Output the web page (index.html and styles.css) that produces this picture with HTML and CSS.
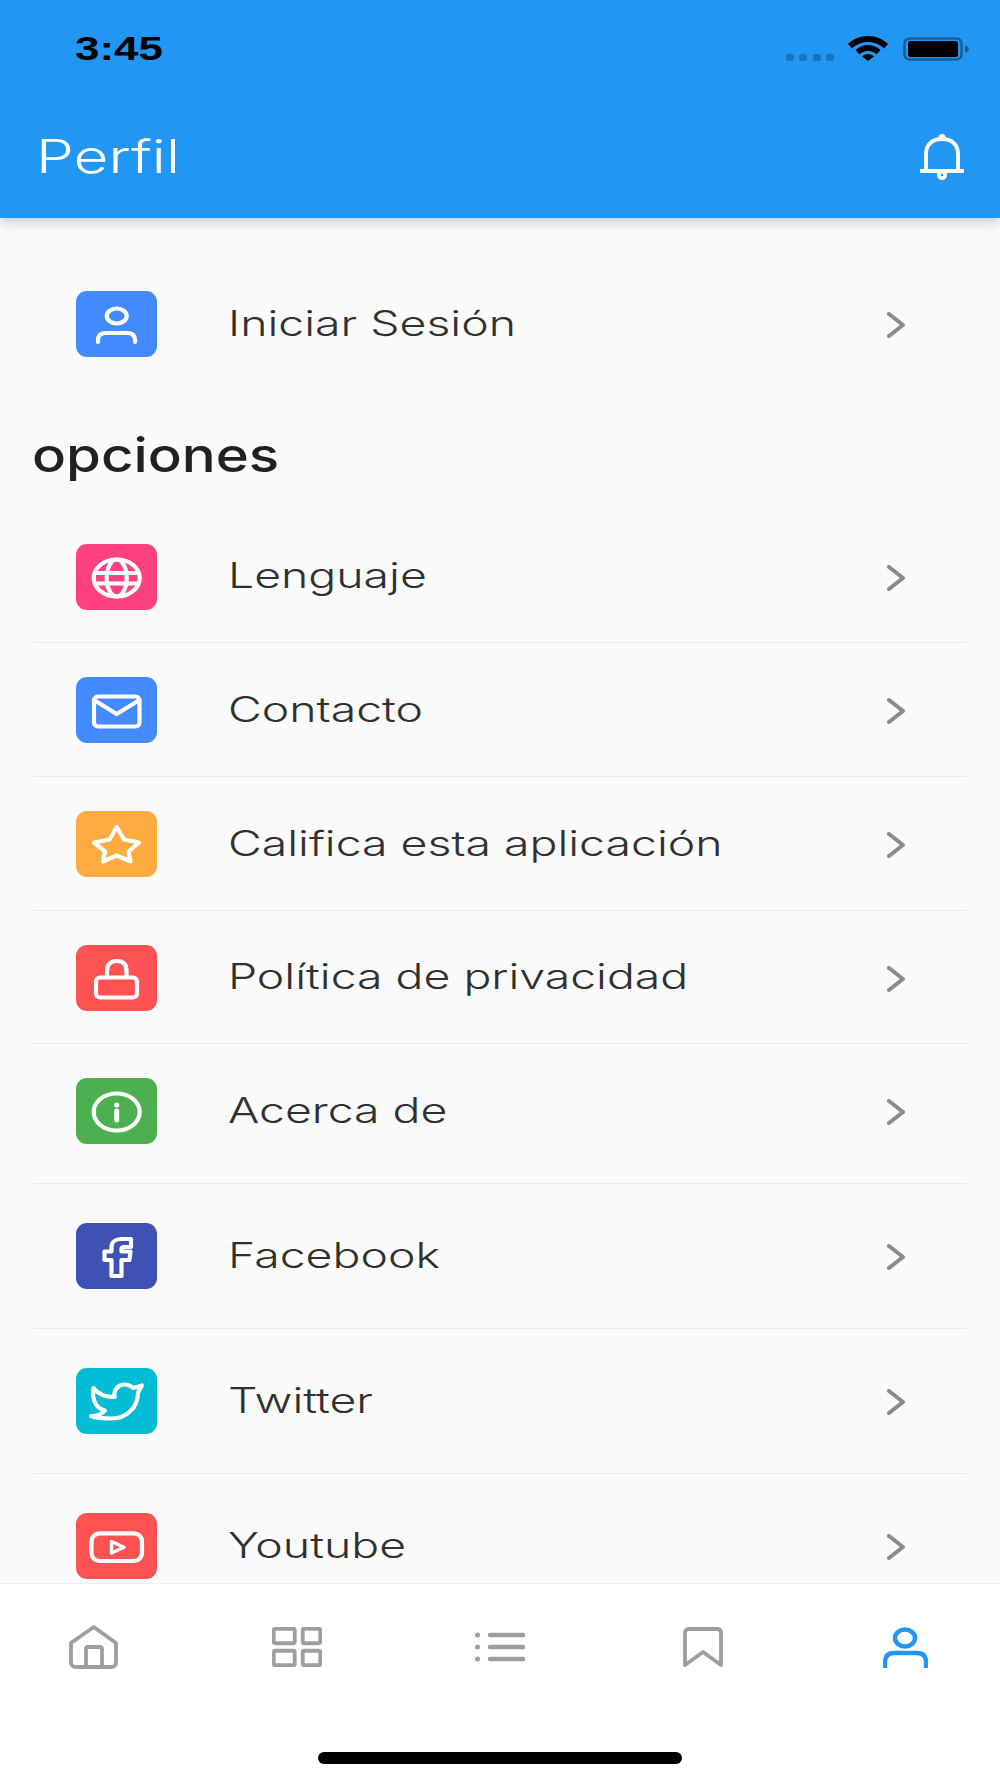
FILE: index.html
```html
<!DOCTYPE html>
<html lang="es">
<head>
<meta charset="utf-8">
<title>Perfil</title>
<link rel="stylesheet" href="styles.css">
</head>
<body>
<div class="app">
  <header class="header">
    <div class="status">
      <span class="time">3:45</span>
      <div class="status-icons">
        <div class="dots"><i></i><i></i><i></i><i></i></div>
        <svg class="wifi" viewBox="0 0 40 25"><path d="M20 0C12 0 5 3 0 8l4 4.500C8 8.500 14 6 20 6s12 2.500 16 6.500L40 8C35 3 28 0 20 0zM20 9c-5 0-9.500 2-12.500 5l4 4.500C13.500 16.500 16.500 15 20 15s6.500 1.500 8.500 3.500l4-4.500C29.500 11 25 9 20 9zM20 18c-2.500 0-4.500 1-6 2.500L20 25l6-4.500C24.500 19 22.500 18 20 18z"/></svg>
        <svg class="battery" viewBox="0 0 66 24"><rect class="batt-frame" x="1.500" y="1.500" width="57" height="21" rx="5"/><rect x="5" y="4" width="50" height="16" rx="2.500"/><path class="batt-nub" d="M62 8.500c2.500.5 4 1.800 4 3.500s-1.500 3-4 3.500z"/></svg>
      </div>
    </div>
    <div class="appbar">
      <h1 class="title"><span>Perfil</span></h1>
      <svg class="bell" viewBox="0 0 44 46"><circle class="solid" cx="22" cy="3.500" r="3.500"/><path d="M6 36V20C6 10 13 5 22 5s16 5 16 15v16"/><path d="M1 37H43"/><circle cx="22" cy="41" r="3.200"/></svg>
    </div>
  </header>

  <main class="content">
    <a class="row row-login">
      <span class="tile blue"><svg viewBox="0 0 81 66"><ellipse cx="40.700" cy="25" rx="10" ry="7.500"/><path d="M22 51V49Q22 42 30 42H51Q59 42 59 49V51"/></svg></span>
      <span class="label">Iniciar Sesión</span>
      <svg class="chevron" viewBox="0 0 18 26"><path d="M2 2L16 13L2 24"/></svg>
    </a>

    <h2 class="section"><span>opciones</span></h2>

    <div class="list">
      <a class="row">
        <span class="tile pink"><svg viewBox="0 0 81 66"><ellipse cx="40.700" cy="34" rx="23" ry="18.500"/><ellipse cx="40.700" cy="34" rx="10" ry="18.500"/><path d="M19 29H62M19 39.500H62"/></svg></span>
        <span class="label">Lenguaje</span>
        <svg class="chevron" viewBox="0 0 18 26"><path d="M2 2L16 13L2 24"/></svg>
      </a>
      <a class="row">
        <span class="tile blue"><svg viewBox="0 0 81 66"><rect x="18" y="19.500" width="45.500" height="30" rx="4"/><path d="M18 23L40.700 37L63.500 23"/></svg></span>
        <span class="label">Contacto</span>
        <svg class="chevron" viewBox="0 0 18 26"><path d="M2 2L16 13L2 24"/></svg>
      </a>
      <a class="row">
        <span class="tile orange"><svg viewBox="0 0 81 66"><path d="M40.700 16L48 28.500L63 31.500L52.500 40.500L54.500 50.500L40.700 44.500L27 50.500L29 40.500L18 31.500L33.500 28.500Z"/></svg></span>
        <span class="label">Califica esta aplicación</span>
        <svg class="chevron" viewBox="0 0 18 26"><path d="M2 2L16 13L2 24"/></svg>
      </a>
      <a class="row">
        <span class="tile red"><svg viewBox="0 0 81 66"><rect x="20" y="32.500" width="41" height="20" rx="4"/><path d="M31 32V26Q31 16 40.700 16Q50.500 16 50.500 26V32"/></svg></span>
        <span class="label">Política de privacidad</span>
        <svg class="chevron" viewBox="0 0 18 26"><path d="M2 2L16 13L2 24"/></svg>
      </a>
      <a class="row row-last-plain">
        <span class="tile green"><svg viewBox="0 0 81 66"><ellipse cx="40.700" cy="34" rx="23" ry="18.500"/><path class="stem" d="M40.700 33V42"/><circle class="solid" cx="40.700" cy="27" r="2.600"/></svg></span>
        <span class="label">Acerca de</span>
        <svg class="chevron" viewBox="0 0 18 26"><path d="M2 2L16 13L2 24"/></svg>
      </a>
      <a class="row row-social">
        <span class="tile indigo"><svg viewBox="0 0 81 66"><path d="M35.500 53V37H28.500V28.500H35.500V24C35.500 19 39.500 16 45.500 16H55V24H48Q45.500 24 45.500 26V28.500H54.500L53.500 37H45.500V53Z"/></svg></span>
        <span class="label">Facebook</span>
        <svg class="chevron" viewBox="0 0 18 26"><path d="M2 2L16 13L2 24"/></svg>
      </a>
      <a class="row row-social">
        <span class="tile cyan"><svg viewBox="0 0 81 66"><path d="M15 48C22 48 26 46 29 42.500C22 41 15 34 17.500 20C22 26 30 29 38.500 29C37.500 21 43 16.500 48 16.500C52 16.500 55 18 57 20L66 17.500L62 24.500C62 40 50 50.500 36 50.500C28 50.500 20 50 15 48Z"/></svg></span>
        <span class="label">Twitter</span>
        <svg class="chevron" viewBox="0 0 18 26"><path d="M2 2L16 13L2 24"/></svg>
      </a>
      <a class="row row-social">
        <span class="tile red"><svg viewBox="0 0 81 66"><rect x="15.500" y="20.300" width="50.500" height="27.700" rx="8"/><path class="thin" d="M35.500 28.500L48 34.300L35.500 40Z"/></svg></span>
        <span class="label">Youtube</span>
        <svg class="chevron" viewBox="0 0 18 26"><path d="M2 2L16 13L2 24"/></svg>
      </a>
    </div>
  </main>

  <nav class="tabbar">
    <div class="tabs">
      <div class="tab-cell"><svg class="tab tab-home" viewBox="0 0 49 44"><path d="M2 18L24.700 2L47 18V37Q47 42 42 42H7Q2 42 2 37Z"/><path d="M17 42V24Q17 22 19 22H31Q33 22 33 24V42"/></svg></div>
      <div class="tab-cell"><svg class="tab tab-grid" viewBox="0 0 50 40"><rect x="1.750" y="1.750" width="21" height="14.500" rx="1.500"/><rect x="30.750" y="1.750" width="17.500" height="14.500" rx="1.500"/><rect x="1.750" y="23.750" width="21" height="14.500" rx="1.500"/><rect x="30.750" y="23.750" width="17.500" height="14.500" rx="1.500"/></svg></div>
      <div class="tab-cell"><svg class="tab tab-list" viewBox="0 0 50 30"><path class="dot" d="M2.500 3V3.100M2.500 15V15.100M2.500 27V27.100"/><path d="M15 3H48M15 15H48M15 27H48"/></svg></div>
      <div class="tab-cell"><svg class="tab tab-mark" viewBox="0 0 40 40"><path d="M2 38V6Q2 2 6 2H34Q38 2 38 6V38L20 25Z"/></svg></div>
      <div class="tab-cell"><svg class="tab tab-user" viewBox="0 0 45 41"><ellipse cx="22" cy="11" rx="10" ry="8.500"/><path d="M2 41V35Q2 26 11 26H34Q43 26 43 35V41"/></svg></div>
    </div>
    <div class="home-indicator"></div>
  </nav>
</div>
</body>
</html>
```
FILE: styles.css
```css
* { box-sizing: border-box; }
html, body { margin: 0; padding: 0; }
body { background: #fafafa; font-family: "Inter", "Liberation Sans", sans-serif; }

.app { width: 1000px; height: 1778px; display: flex; flex-direction: column; overflow: hidden; }

/* header */
.header { height: 218px; background: #2196f3; position: relative; z-index: 2; box-shadow: 0 3px 12px rgba(0,0,0,.22); flex: none; }
.status { height: 98px; padding: 30px 31px 0 75px; display: flex; justify-content: space-between; align-items: flex-start; }
.time { font: 700 33px/38px "Liberation Sans", sans-serif; color: #000; display: block; transform: scaleX(1.33); transform-origin: left center; }
.status-icons { display: flex; align-items: flex-start; padding-top: 6px; }
.dots { display: flex; gap: 5.500px; margin: 18px 14px 0 0; }
.dots i { width: 8px; height: 7px; border-radius: 2px; background: #1a74bd; }
.wifi { width: 40px; height: 25px; fill: #000; margin-right: 15px; }
.battery { width: 66px; height: 24px; margin-top: 1px; }
.batt-frame { fill: none; stroke: #165f97; stroke-width: 2.500; }
.batt-nub { fill: #165f97; }

.appbar { height: 120px; padding: 0 36px 0 36px; display: flex; align-items: center; justify-content: space-between; }
.title { margin: -4px 0 0; font-size: 46px; line-height: 56px; font-weight: 300; color: #fff; }
.title span { display: block; transform: scaleX(1.31); transform-origin: left center; }
.bell { width: 44px; height: 46px; margin-top: -2px; fill: none; stroke: #fff; stroke-width: 3.800; stroke-linecap: round; }
.solid { fill: currentColor; stroke: none; }
.bell .solid { fill: #fff; }

/* content */
.content { flex: 1; min-height: 0; overflow: hidden; padding: 39px 33px 0; background: #fafafa; }
.row { display: flex; align-items: center; padding: 34px 0 32.700px 43px; }
.row-login { padding-bottom: 0; }
.list .row { border-bottom: 1px solid #e8e8e8; }
.list .row-last-plain { padding-bottom: 39px; }
.list .row-social { padding: 39px 0 39px 43px; }

.tile { width: 81px; height: 66px; border-radius: 11px; flex: none; display: block; }
.tile svg { display: block; width: 81px; height: 66px; fill: none; stroke: #fff; stroke-width: 4.200; stroke-linecap: round; stroke-linejoin: round; }
.tile .solid { fill: #fff; }
.tile .thin { stroke-width: 3.400; }
.tile .stem { stroke-width: 5; }
.blue { background: #448aff; }
.pink { background: #ff4081; }
.orange { background: #ffab40; }
.red { background: #ff5252; }
.green { background: #4caf50; }
.indigo { background: #3f51b5; }
.cyan { background: #00bcd4; }

.label { flex: 1; margin: -3px 0 0 71px; font-size: 35px; line-height: 44px; font-weight: 300; color: #303030; transform: scaleX(1.325); transform-origin: left center; white-space: nowrap; }
.chevron { width: 18px; height: 26px; flex: none; margin: 2px 62px 0 0; fill: none; stroke: #8a8a8a; stroke-width: 4; stroke-linecap: round; stroke-linejoin: round; }

.section { margin: 0; padding: 70px 0 26.700px; font-size: 47px; line-height: 56px; font-weight: 500; color: #212121; }
.section span { display: block; transform: scaleX(1.2); transform-origin: left center; margin-left: -1px; }

/* tab bar */
.tabbar { height: 195px; flex: none; background: #fff; border-top: 1px solid #eeeeee; position: relative; z-index: 1; }
.tabs { height: 168px; padding-top: 41px; display: grid; grid-template-columns: repeat(5, 203px); justify-content: center; align-items: start; }
.tab-cell { display: flex; justify-content: center; }
.tab { display: block; fill: none; stroke: #9e9e9e; stroke-width: 3.800; stroke-linecap: round; stroke-linejoin: round; flex: none; }
.tab-home { width: 49px; height: 44px; margin-left: -2px; }
.tab-grid { width: 50px; height: 40px; margin-top: 2px; }
.tab-list { width: 50px; height: 30px; margin-top: 7px; stroke-width: 4.500; }
.tab-list .dot { stroke-width: 5; }
.tab-mark { width: 40px; height: 40px; margin-top: 2px; }
.tab-user { width: 45px; height: 41px; margin: 2px 1px 0 0; stroke: #2196f3; stroke-width: 4.400; }
.home-indicator { width: 364px; height: 12px; margin: 0 auto; border-radius: 6px; background: #000; }
```
